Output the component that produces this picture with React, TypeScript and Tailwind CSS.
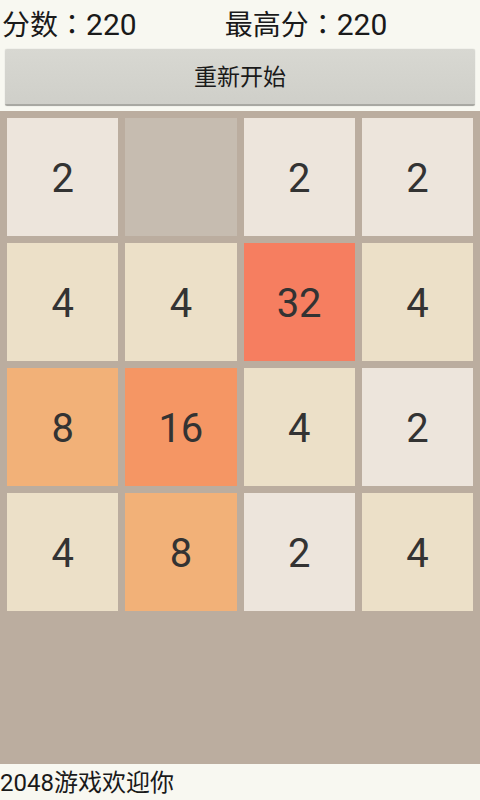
const board: number[][] = [
  [2, 0, 2, 2],
  [4, 4, 32, 4],
  [8, 16, 4, 2],
  [4, 8, 2, 4],
];

const tileColors: Record<number, string> = {
  0: 'bg-[#c6bcb0]',
  2: 'bg-[#ede5dc]',
  4: 'bg-[#ece0c8]',
  8: 'bg-[#f2b178]',
  16: 'bg-[#f59664]',
  32: 'bg-[#f67e60]',
};

const font = { fontFamily: 'Roboto, "Noto Sans CJK SC", sans-serif' };
const colonFont = { fontFamily: '"Noto Sans CJK TC", sans-serif' };

function Tile({ value }: { value: number }) {
  return (
    <div
      className={`flex h-[118px] items-center justify-center pt-[4px] text-[40px] text-[#333333] ${tileColors[value]}`}
    >
      {value > 0 ? value : ''}
    </div>
  );
}

function Score({ label, value }: { label: string; value: number }) {
  return (
    <span className="flex items-baseline">
      <span className="text-[28px]">{label}</span>
      <span className="text-[28px]" style={colonFont}>
        ：
      </span>
      <span className="text-[30px]">{value}</span>
    </span>
  );
}

export default function App() {
  return (
    <div className="flex h-[800px] w-[480px] flex-col bg-[#f8f8f1]" style={font}>
      {/* score row */}
      <div className="flex h-[49px] items-center gap-[88px] pl-[2px] leading-none text-[#1a1a1a]">
        <Score label="分数" value={220} />
        <Score label="最高分" value={220} />
      </div>

      {/* restart */}
      <div className="px-[5px]">
        <button className="h-[57px] w-full rounded-[2px] border-b-2 border-[#a8a8a2] bg-gradient-to-b from-[#d8d8d2] to-[#cfcfc9] pt-[4px] text-[23px] text-[#1a1a1a] shadow-[0_0_1px_#b8b8b2]">
          重新开始
        </button>
      </div>

      {/* board */}
      <div className="mt-[5px] flex-1 bg-[#bbad9f] px-[7px] pt-[7px]">
        <div className="grid grid-cols-4 gap-[7px]">
          {board.flat().map((v, i) => (
            <Tile key={i} value={v} />
          ))}
        </div>
      </div>

      {/* footer */}
      <div className="flex h-[36px] items-center pt-[2px] text-[24px] leading-none text-[#1a1a1a]">
        2048游戏欢迎你
      </div>
    </div>
  );
}
